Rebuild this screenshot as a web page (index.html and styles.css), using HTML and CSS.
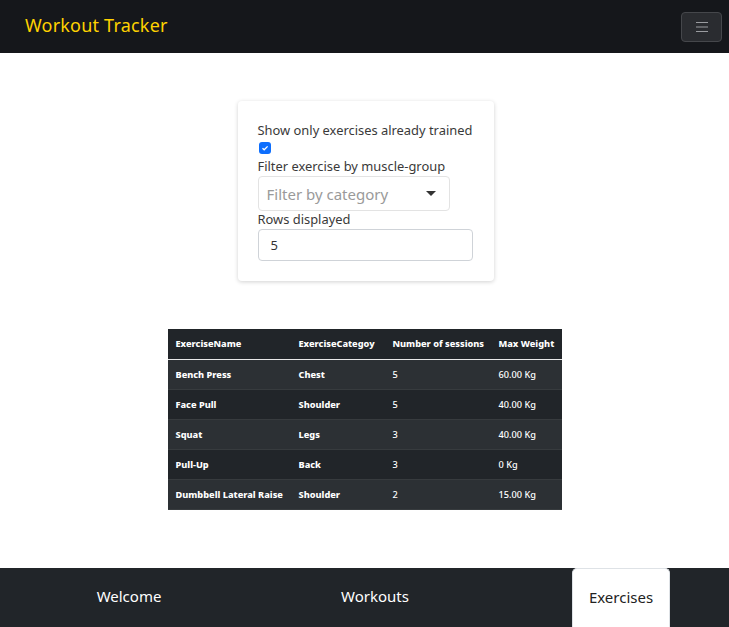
FILE: index.html
```html
<!DOCTYPE html>
<html lang="en">
<head>
<meta charset="utf-8">
<title>Workout Tracker</title>
<link rel="stylesheet" href="styles.css">
</head>
<body>
<header class="navbar">
  <span class="brand">Workout Tracker</span>
  <button class="toggler" type="button" aria-label="Toggle navigation">
    <svg width="14" height="12" viewBox="0 0 14 12"><path d="M1 1.5h12M1 6h12M1 10.5h12" stroke="#9a9ca0" stroke-width="1.2" fill="none"/></svg>
  </button>
</header>
<main class="main">
  <section class="card">
    <label class="label">Show only exercises already trained</label>
    <span class="check"><svg width="8" height="8" viewBox="0 0 8 8"><path d="M1.5 4.2l1.7 1.6L6.6 2.4" stroke="#fff" stroke-width="1.3" fill="none"/></svg></span>
    <label class="label">Filter exercise by muscle-group</label>
    <div class="select"><span>Filter by category</span><span class="caret"></span></div>
    <label class="label">Rows displayed</label>
    <div class="input">5</div>
  </section>
  <table class="table">
    <colgroup><col class="c1"><col class="c2"><col class="c3"><col class="c4"></colgroup>
    <thead>
      <tr><th>ExerciseName</th><th>ExerciseCategoy</th><th>Number of sessions</th><th>Max Weight</th></tr>
    </thead>
    <tbody>
      <tr class="odd"><td class="b">Bench Press</td><td class="b">Chest</td><td>5</td><td>60.00 Kg</td></tr>
      <tr><td class="b">Face Pull</td><td class="b">Shoulder</td><td>5</td><td>40.00 Kg</td></tr>
      <tr class="odd"><td class="b">Squat</td><td class="b">Legs</td><td>3</td><td>40.00 Kg</td></tr>
      <tr><td class="b">Pull-Up</td><td class="b">Back</td><td>3</td><td>0 Kg</td></tr>
      <tr class="odd"><td class="b">Dumbbell Lateral Raise</td><td class="b">Shoulder</td><td>2</td><td>15.00 Kg</td></tr>
    </tbody>
  </table>
</main>
<footer class="footer">
  <a class="tab">Welcome</a>
  <a class="tab">Workouts</a>
  <a class="tab active">Exercises</a>
</footer>
</body>
</html>
```
FILE: styles.css
```css
* { box-sizing: border-box; }
html, body { margin: 0; height: 100%; }
body {
  font-family: "Noto Sans", "Open Sans", sans-serif;
  color: #333;
  background: #fff;
  display: flex;
  flex-direction: column;
  overflow: hidden;
}
.navbar {
  height: 53px;
  flex: none;
  background: #15171b;
  display: flex;
  align-items: center;
  justify-content: space-between;
  padding: 0 7px 0 25px;
}
.brand {
  color: #ffd200;
  font-size: 18px;
  letter-spacing: 0.2px;
  margin-bottom: 4px;
}
.toggler {
  width: 41px;
  height: 30px;
  background: #2a2c30;
  border: 1px solid #45474b;
  border-radius: 4px;
  display: flex;
  align-items: center;
  justify-content: center;
  padding: 0;
  margin-top: 1px;
}
.main {
  flex: 1;
  display: flex;
  flex-direction: column;
  align-items: center;
  padding-top: 48px;
}
.card {
  width: 256px;
  height: 180px;
  background: #fff;
  border-radius: 4px;
  box-shadow: 0 1px 4px rgba(0,0,0,0.18);
  padding: 21px 20px 0 20px;
  display: flex;
  flex-direction: column;
  align-items: flex-start;
  margin-left: 2px;
}
.label {
  font-size: 12.9px;
  line-height: 17px;
  color: #3a3a3a;
}
.check {
  width: 12px;
  height: 12px;
  background: #0d6efd;
  border-radius: 3px;
  display: flex;
  align-items: center;
  justify-content: center;
  margin: 3px 0 4px 1px;
}
.select {
  width: 192px;
  height: 35px;
  border: 1px solid #e3e3e3;
  border-radius: 4px;
  display: flex;
  align-items: center;
  justify-content: space-between;
  padding: 0 13px 0 8px;
  font-size: 15px;
  color: #9a9a9a;
  margin: 1px 0 0 0;
}
.caret {
  width: 0;
  height: 0;
  border-left: 5px solid transparent;
  border-right: 5px solid transparent;
  border-top: 5px solid #333;
}
.input {
  width: 215px;
  height: 32px;
  border: 1px solid #cfd3d8;
  border-radius: 4px;
  padding: 0 12px;
  display: flex;
  align-items: center;
  font-size: 13px;
  color: #333;
  margin-top: 1px;
}
.table {
  margin-top: 48px;
  width: 394px;
  border-collapse: collapse;
  font-size: 9.2px;
  color: #fff;
  table-layout: fixed;
}
.c1 { width: 123px; }
.c2 { width: 94px; }
.c3 { width: 106px; }
.c4 { width: 71px; }
.table th, .table td {
  text-align: left;
  padding: 0 8px;
  height: 30px;
  white-space: nowrap;
  overflow: hidden;
}
.table th {
  background: #212529;
  font-weight: 800;
  border-bottom: 1.5px solid #e8e8e8;
}
.table td {
  background: #212529;
  border-bottom: 1px solid #373b3e;
  font-weight: 500;
}
.table tr.odd td { background: #2c3034; }
.table td.b { font-weight: 800; }
.footer {
  flex: none;
  height: 59px;
  background: #212529;
  display: grid;
  grid-template-columns: 246px 246px 246px;
  justify-items: center;
  padding-left: 6px;
  overflow: hidden;
}
.tab {
  color: #fff;
  font-size: 15px;
  padding: 0 16px;
  display: flex;
  align-items: center;
  height: 59px;
  padding-bottom: 3px;
}
.tab.active {
  background: #fff;
  color: #222;
  border: 1px solid #dee2e6;
  border-bottom: none;
  border-radius: 5px 5px 0 0;
}
```
